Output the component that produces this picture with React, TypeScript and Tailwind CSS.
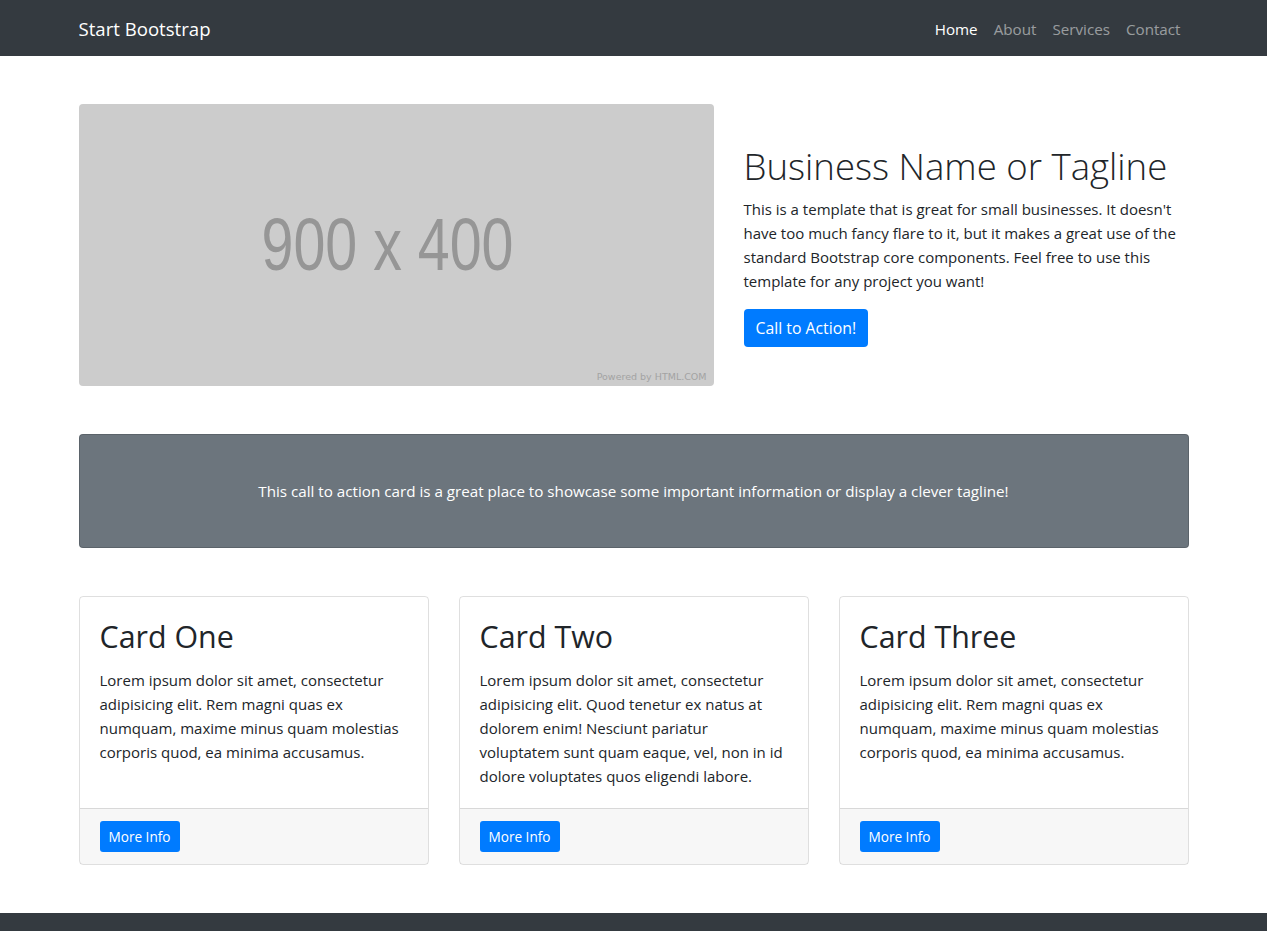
import React from 'react';

const cards = [
  {
    title: 'Card One',
    text: 'Lorem ipsum dolor sit amet, consectetur adipisicing elit. Rem magni quas ex numquam, maxime minus quam molestias corporis quod, ea minima accusamus.',
  },
  {
    title: 'Card Two',
    text: 'Lorem ipsum dolor sit amet, consectetur adipisicing elit. Quod tenetur ex natus at dolorem enim! Nesciunt pariatur voluptatem sunt quam eaque, vel, non in id dolore voluptates quos eligendi labore.',
  },
  {
    title: 'Card Three',
    text: 'Lorem ipsum dolor sit amet, consectetur adipisicing elit. Rem magni quas ex numquam, maxime minus quam molestias corporis quod, ea minima accusamus.',
  },
];

function Navbar() {
  return (
    <nav className="bg-[#343a40] h-14">
      <div className="w-[1140px] mx-auto px-[15px] h-full flex items-center justify-between">
        <a className="text-white text-[18.6px] leading-[30px] pt-[2px]">Start Bootstrap</a>
        <ul className="flex text-[15.2px] leading-6 pt-[2px]">
          <li className="px-2 text-white">Home</li>
          <li className="px-2 text-white/50">About</li>
          <li className="px-2 text-white/50">Services</li>
          <li className="px-2 text-white/50">Contact</li>
        </ul>
      </div>
    </nav>
  );
}

function Placeholder() {
  return (
    <div className="relative w-[635px] h-[282px] bg-[#cccccc] rounded flex items-center justify-center shrink-0">
      <span className="text-[#969696] text-[74px] leading-none font-['Liberation_Sans',Arial,sans-serif] scale-x-[0.775] -translate-x-2">
        900 x 400
      </span>
      <span className="absolute right-[7px] bottom-[5px] text-[9.5px] leading-none text-[#a3a3a3] font-['DejaVu_Sans',sans-serif]">
        Powered by HTML.COM
      </span>
    </div>
  );
}

export default function App() {
  return (
    <div className="w-[1267px] bg-white text-[#212529] font-['Open_Sans','Noto_Sans',sans-serif] text-[15px] leading-6">
      <Navbar />
      <div className="w-[1140px] mx-auto px-[15px]">
        {/* heading row */}
        <div className="flex items-center gap-[30px] my-12">
          <Placeholder />
          <div className="flex-1">
            <h1 className="text-[36.6px] leading-[46px] font-light mb-2">Business Name or Tagline</h1>
            <p className="mb-4">
              This is a template that is great for small businesses. It doesn't have too much fancy flare to it, but it makes a great use of the standard Bootstrap core components. Feel free to use this template for any project you want!
            </p>
            <a className="inline-block bg-[#007bff] text-white rounded px-3 py-[7px] leading-6 text-[15.8px]">
              Call to Action!
            </a>
          </div>
        </div>

        {/* call to action */}
        <div className="bg-[#6c757d] text-white border border-black/15 rounded text-center py-6 my-12">
          <div className="p-5">
            <p className="text-[15.2px]">This call to action card is a great place to showcase some important information or display a clever tagline!</p>
          </div>
        </div>

        {/* content row */}
        <div className="grid grid-cols-3 gap-[30px] mb-12">
          {cards.map(card => (
            <div key={card.title} className="flex flex-col border border-black/[0.125] rounded">
              <div className="flex-1 p-5">
                <h2 className="text-[30.4px] leading-[39px] mb-3">{card.title}</h2>
                <p>{card.text}</p>
              </div>
              <div className="flex bg-black/[0.03] border-t border-black/[0.125] px-5 py-3">
                <a className="bg-[#007bff] text-white border border-transparent rounded-[3px] px-2 py-1 text-[13.6px] leading-[21px]">
                  More Info
                </a>
              </div>
            </div>
          ))}
        </div>
      </div>
      <footer className="bg-[#343a40] py-12">
        <p className="text-center text-white">Copyright &copy; Your Website 2019</p>
      </footer>
    </div>
  );
}
